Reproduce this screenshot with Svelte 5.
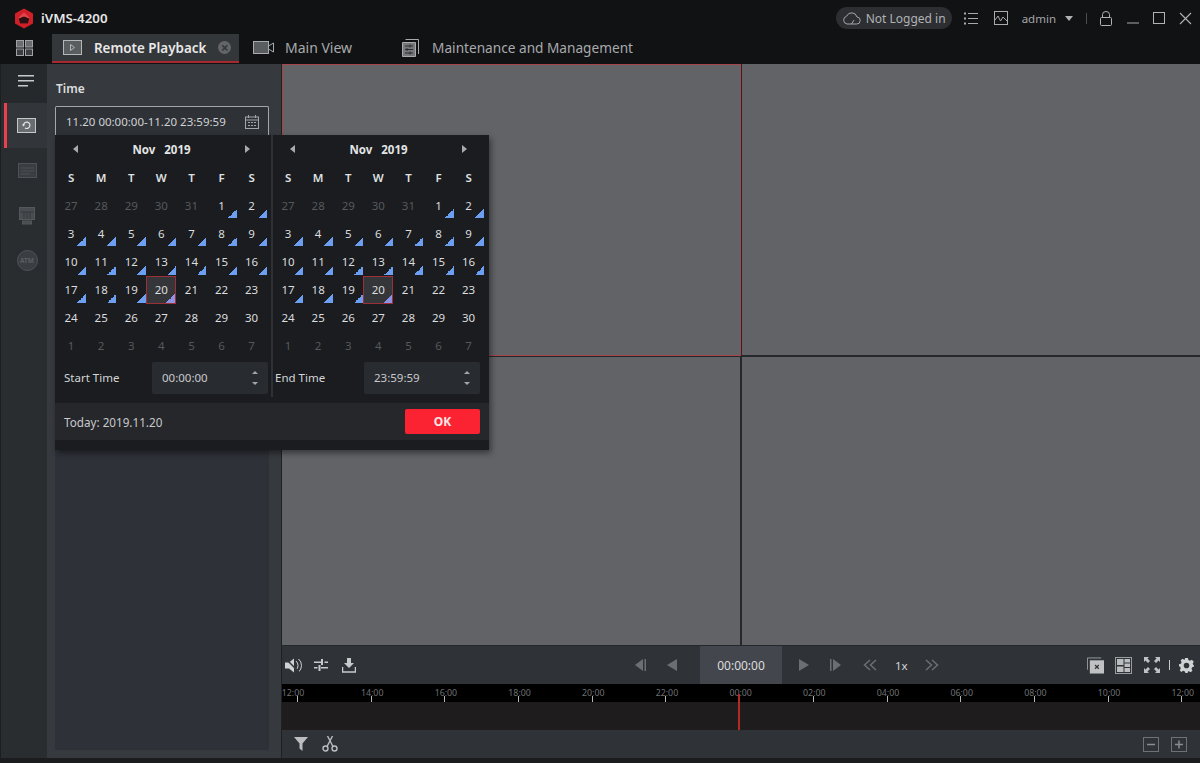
<script lang="ts">
	type Day = { label: number; muted?: boolean; mark?: boolean; selected?: boolean };

	const weekdays = ['S', 'M', 'T', 'W', 'T', 'F', 'S'];

	function buildDays(): Day[] {
		const days: Day[] = [];
		for (const n of [27, 28, 29, 30, 31]) days.push({ label: n, muted: true });
		for (let n = 1; n <= 30; n++) days.push({ label: n, mark: n <= 20, selected: n === 20 });
		for (let n = 1; n <= 7; n++) days.push({ label: n, muted: true });
		return days;
	}

	const days = buildDays();

	const calendars = [
		{ label: 'Start Time', time: '00:00:00' },
		{ label: 'End Time', time: '23:59:59' }
	];

	const hours = ['12:00', '14:00', '16:00', '18:00', '20:00', '22:00', '00:00', '02:00', '04:00', '06:00', '08:00', '10:00', '12:00'];
</script>

<div class="app">
	<header class="top">
		<div class="title-row">
			<svg class="logo" width="20" height="21" viewBox="0 0 20 21">
				<path d="M10 0.500 19 5.500V15.500L10 20.500 1 15.500V5.500Z" fill="#d01f27" />
				<path d="M10 4.500 15.500 9.500 14 15.500H6L4.500 9.500Z" fill="#e0454b" />
				<path d="M4.800 10.500 10 8.500 15.200 10.500 14 15.500H6Z" fill="#2c0f11" />
			</svg>
			<span class="app-name">iVMS-4200</span>
			<div class="pill">
				<svg width="19" height="14" viewBox="0 0 19 14" fill="none" stroke="#a4a6a9" stroke-width="1">
					<path d="M5 13H14.500A3.500 3.500 0 0 0 15 6 5.500 5.500 0 0 0 4.600 5.200 4 4 0 0 0 5 13Z" />
					<path d="M9.500 13 12 9" />
				</svg>
				<span>Not Logged in</span>
			</div>
			<svg class="list-icon" width="14" height="13" viewBox="0 0 14 13" fill="#a8aaad">
				<rect x="0" y="0.5" width="2" height="2" /><rect x="4" y="1" width="10" height="1" />
				<rect x="0" y="5.5" width="2" height="2" /><rect x="4" y="6" width="10" height="1" />
				<rect x="0" y="10.5" width="2" height="2" /><rect x="4" y="11" width="10" height="1" />
			</svg>
			<svg class="chart-icon" width="14" height="14" viewBox="0 0 14 14" fill="none" stroke="#a8aaad">
				<rect x="0.5" y="0.5" width="13" height="13" />
				<path d="M1 9 4 5 6.500 10 9 6 13 10" />
			</svg>
			<span class="user">admin</span>
			<span class="caret"></span>
			<span class="bar"></span>
			<svg class="lock" width="12" height="15" viewBox="0 0 12 15" fill="none" stroke="#b0b2b5">
				<rect x="0.5" y="6.5" width="11" height="8" rx="1" />
				<path d="M2.500 6.500V3.500A3.500 3 0 0 1 9.500 3.500V6.500" />
			</svg>
			<svg class="win-min" width="12" height="2" viewBox="0 0 12 2"><rect width="12" height="1" y="0.5" fill="#a8aaad" /></svg>
			<svg class="win-max" width="12" height="12" viewBox="0 0 12 12" fill="none" stroke="#b0b2b5"><rect x="0.5" y="0.5" width="11" height="11" /></svg>
			<svg class="win-close" width="13" height="13" viewBox="0 0 13 13" stroke="#b0b2b5" stroke-width="1.1"><path d="M1 1 12 12M12 1 1 12" /></svg>
		</div>
		<nav class="tab-row">
			<svg class="home" width="17" height="16" viewBox="0 0 17 16" stroke="#a0a2a5">
				<rect x="0.5" y="0.5" width="7" height="6.500" fill="#6a6c6f" /><rect x="9.5" y="0.5" width="7" height="6.500" fill="#6a6c6f" />
				<rect x="0.5" y="9" width="7" height="6.500" fill="#3c3e41" /><rect x="9.5" y="9" width="7" height="6.500" fill="#3c3e41" />
			</svg>
			<div class="tab active">
				<svg width="19" height="15" viewBox="0 0 19 15" fill="none" stroke="#b4b6b8">
					<rect x="0.5" y="0.5" width="18" height="14" fill="#5a5d60" />
					<path d="M7.500 4.500 11.500 7.500 7.500 10.500Z" />
				</svg>
				<span class="tab-label">Remote Playback</span>
				<span class="tab-close">×</span>
			</div>
			<div class="tab main-view">
				<svg width="21" height="13" viewBox="0 0 21 13" fill="#5a5d60" stroke="#a8aaad">
					<rect x="0.5" y="0.5" width="15" height="12" />
					<path d="M15.500 5 20.500 2V11L15.500 8" fill="none" />
				</svg>
				<span class="tab-label">Main View</span>
			</div>
			<div class="tab maint">
				<svg width="17" height="18" viewBox="0 0 17 18" fill="none" stroke="#a8aaad">
					<path d="M0.500 3.500H13.500V17.500H0.500Z" fill="#76787b" />
					<path d="M3.500 0.500H16.500V15" />
					<path d="M3 7H11M3 10.500H11M3 14H11" stroke="#2a2c2e" />
					<path d="M8 5.500V8.500M5 9V12M8 12.500V15.500" stroke="#2a2c2e" />
				</svg>
				<span class="tab-label">Maintenance and Management</span>
			</div>
		</nav>
	</header>

	<div class="body">
		<aside class="rail">
			<div class="rail-menu">
				<svg width="16" height="12" viewBox="0 0 16 12" fill="#c8c9cb">
					<rect width="16" height="1.500" /><rect y="5" width="16" height="1.500" /><rect y="10" width="10" height="1.500" />
				</svg>
			</div>
			<div class="rail-item current">
				<svg width="19" height="15" viewBox="0 0 19 15">
					<rect x="0.5" y="0.5" width="18" height="14" fill="#6a6d70" stroke="#c6c7c9" />
					<path d="M6.500 7A3.200 3.200 0 1 1 8 10" fill="none" stroke="#e2e3e4" stroke-width="1.200" />
					<path d="M4.800 6.500H8.200L6.500 8.500Z" fill="#e2e3e4" />
				</svg>
			</div>
			<div class="rail-item">
				<svg width="19" height="15" viewBox="0 0 19 15" fill="#3a3d41" stroke="#4e5155">
					<rect x="0.5" y="0.5" width="18" height="14" />
					<path d="M3 5H16M3 8H16M3 11H12" fill="none" />
				</svg>
			</div>
			<div class="rail-item">
				<svg width="16" height="18" viewBox="0 0 16 18" fill="#4a4d50" stroke="#55585b">
					<rect x="0.500" y="0.500" width="15" height="12" />
					<path d="M1 5H15M5 5V12M8 5V12M11 5V12" stroke="#33363a" fill="none" />
					<rect x="3.500" y="14" width="9" height="3" />
				</svg>
			</div>
			<div class="rail-item">
				<div class="atm">ATM</div>
			</div>
		</aside>

		<section class="side">
			<div class="side-title">Time</div>
			<div class="range">
				<span>11.20 00:00:00-11.20 23:59:59</span>
				<svg width="14" height="14" viewBox="0 0 14 14" fill="none" stroke="#a4a6a9">
					<rect x="0.5" y="2" width="13" height="11.500" />
					<path d="M0.500 5H13.500M3.500 0V3M10.500 0V3" />
					<path d="M3 7.500H5M6 7.500H8M9 7.500H11M3 10.500H5M6 10.500H8M9 10.500H11" />
				</svg>
			</div>
			<div class="side-fill"></div>

			<div class="popup">
				<div class="calendars">
					{#each calendars as cal, c}
						<div class="cal" class:second={c === 1}>
							<div class="month">
								<span class="arrow left"></span>
								<span class="month-name"><span>Nov</span><span>2019</span></span>
								<span class="arrow right"></span>
							</div>
							<div class="grid">
								{#each weekdays as w}
									<div class="dow">{w}</div>
								{/each}
								{#each days as d}
									<div class="day" class:muted={d.muted} class:mark={d.mark} class:selected={d.selected}>{d.label}</div>
								{/each}
							</div>
							<div class="time-row">
								<span class="time-label">{cal.label}</span>
								<div class="time-input">
									<span>{cal.time}</span>
									<span class="spin"><i class="up"></i><i class="down"></i></span>
								</div>
							</div>
						</div>
					{/each}
				</div>
				<div class="popup-foot">
					<span>Today: 2019.11.20</span>
					<button>OK</button>
				</div>
			</div>
		</section>

		<main class="content">
			<div class="videos">
				<div class="cell first"></div>
				<div class="cell"></div>
				<div class="cell"></div>
				<div class="cell"></div>
			</div>

			<div class="controls">
				<div class="ctl-side">
					<div class="ctl-left">
						<svg width="17" height="15" viewBox="0 0 17 15" fill="#d0d1d3">
							<path d="M0 4.500H4L9 0.500V14.500L4 10.500H0Z" />
							<path d="M11 3A6 6 0 0 1 11 12M13.500 1A8.500 8.500 0 0 1 13.500 14" fill="none" stroke="#d0d1d3" />
							<path d="M1 1 14 14" stroke="#34373c" stroke-width="1.500" />
						</svg>
						<svg width="14" height="12" viewBox="0 0 14 12" fill="#c8c9cb">
							<rect y="2.500" width="7" height="1.500" /><rect x="7" y="0" width="2" height="6" /><rect x="10.500" y="2.500" width="3.500" height="1.500" />
							<rect y="8" width="3.500" height="1.500" /><rect x="4.500" y="6" width="2" height="6" /><rect x="7" y="8" width="7" height="1.500" />
						</svg>
						<svg class="save" width="14" height="15" viewBox="0 0 14 15" fill="#c8c9cb">
							<path d="M5 0H9V5H12L7 10 2 5H5Z" />
							<path d="M0.500 9V14H13.500V9" fill="none" stroke="#c8c9cb" stroke-width="1.500" />
						</svg>
					</div>
					<div class="play-back">
						<svg width="12" height="12" viewBox="0 0 12 12" fill="#6c6f72"><path d="M9 0V12L1 6Z" /><rect x="10.500" width="1.500" height="12" /></svg>
						<svg width="10" height="12" viewBox="0 0 10 12" fill="#6c6f72"><path d="M10 0V12L0 6Z" /></svg>
					</div>
				</div>
				<div class="clock">00:00:00</div>
				<div class="ctl-side">
					<div class="play-forward">
						<svg width="10" height="12" viewBox="0 0 10 12" fill="#6c6f72"><path d="M0 0V12L10 6Z" /></svg>
						<svg class="step" width="11" height="12" viewBox="0 0 11 12" fill="#6c6f72"><rect width="1.500" height="12" /><path d="M3 0V12L11 6Z" /></svg>
						<svg class="slow" width="14" height="12" viewBox="0 0 14 12" fill="none" stroke="#6c6f72" stroke-width="1.500"><path d="M7 1 1.500 6 7 11M13 1 7.500 6 13 11" /></svg>
						<span class="speed">1x</span>
						<svg width="14" height="12" viewBox="0 0 14 12" fill="none" stroke="#6c6f72" stroke-width="1.500"><path d="M1 1 6.500 6 1 11M7 1 12.500 6 7 11" /></svg>
					</div>
					<div class="ctl-right">
						<svg width="17" height="17" viewBox="0 0 18 17">
							<path d="M0.500 13V0.500H15" fill="none" stroke="#9a9c9f" />
							<rect x="3" y="3" width="15" height="14" fill="#c0c1c3" />
							<path d="M8.500 8 12.500 12M12.500 8 8.500 12" stroke="#33363a" stroke-width="1.300" />
						</svg>
						<svg width="17" height="17" viewBox="0 0 17 17" fill="#bcbdbf">
							<rect x="0.500" y="0.500" width="16" height="16" fill="none" stroke="#9a9c9f" />
							<rect x="2" y="2" width="6.500" height="6" /><rect x="2" y="9.500" width="6.500" height="5.500" />
							<rect x="9.500" y="2" width="5.500" height="3.500" /><rect x="9.500" y="6.500" width="5.500" height="3.500" /><rect x="9.500" y="11" width="5.500" height="4" />
						</svg>
						<svg class="fit" width="16" height="16" viewBox="0 0 16 16" fill="#c0c1c3">
							<path d="M0 0H5L3.500 1.500 6 4 4 6 1.500 3.500 0 5Z" />
							<path d="M16 0V5L14.500 3.500 12 6 10 4 12.500 1.500 11 0Z" />
							<path d="M0 16V11L1.500 12.500 4 10 6 12 3.500 14.500 5 16Z" />
							<path d="M16 16H11L12.500 14.500 10 12 12 10 14.500 12.500 16 11Z" />
						</svg>
						<span class="ctl-bar"></span>
						<svg width="15" height="15" viewBox="0 0 16 16" fill="#d0d1d3">
							<path fill-rule="evenodd" d="M6.500 0H9.500L10 2.200 11.700 3 13.700 1.900 15.800 4 14.600 5.900 15.300 7.500 16 8V9L14 9.800 13.300 11.500 14.300 13.600 12.400 15.200 10.500 14 9.500 14.500 9.200 16H6.800L6.300 14.300 4.500 13.700 2.400 14.800 0.800 13 1.900 11 1.200 9.300 0 8.800V6.700L2 6.200 2.800 4.400 1.800 2.400 3.800 0.800 5.500 1.900 6.200 1.600ZM8 5A3 3 0 1 0 8 11 3 3 0 0 0 8 5Z" />
						</svg>
					</div>
				</div>
			</div>

			<div class="ruler">
				<div class="hours">
					{#each hours as h}
						<div class="hour"><span>{h}</span><i></i></div>
					{/each}
				</div>
			</div>
			<div class="track"><span class="playhead"></span></div>

			<div class="foot">
				<div class="foot-left">
					<svg width="14" height="14" viewBox="0 0 14 14" fill="#bcbdbf"><path d="M0 0H14L8.500 6.500V14L5.500 11.500V6.500Z" /></svg>
					<svg width="16" height="16" viewBox="0 0 16 16" fill="none" stroke="#bcbdbf" stroke-width="1.400">
						<circle cx="3.500" cy="12.500" r="2.500" /><circle cx="12.500" cy="12.500" r="2.500" />
						<path d="M5 10.500 10.500 0M11 10.500 5.500 0" />
					</svg>
				</div>
				<div class="foot-right">
					<svg width="16" height="15" viewBox="0 0 16 15" fill="none" stroke="#6f7275"><rect x="0.500" y="0.500" width="15" height="14" /><path d="M4 7.500H12" stroke="#8a8c8f" stroke-width="1.500" /></svg>
					<svg width="16" height="15" viewBox="0 0 16 15" fill="none" stroke="#6f7275"><rect x="0.500" y="0.500" width="15" height="14" /><path d="M4 7.500H12M8 3.500V11.500" stroke="#8a8c8f" stroke-width="1.500" /></svg>
				</div>
			</div>
		</main>
	</div>
	<div class="bottom-strip"></div>
</div>

<style>
	:global(body) {
		margin: 0;
		background: #1a1c1e;
	}

	.app {
		width: 1200px;
		height: 763px;
		display: flex;
		flex-direction: column;
		overflow: hidden;
		font-family: 'Noto Sans', 'Open Sans', sans-serif;
		font-size: 12px;
		color: #d8d9da;
	}

	svg {
		display: block;
		flex: none;
	}

	.top {
		height: 64px;
		flex: none;
		background: #111214;
		box-sizing: border-box;
	}

	.title-row {
		height: 34px;
		display: flex;
		align-items: center;
		padding: 2px 8px 0 14px;
		box-sizing: border-box;
	}

	.app-name {
		margin-left: 7px;
		font-size: 13.300px;
		font-weight: 600;
		color: #e6e6e6;
	}

	.pill {
		margin-left: auto;
		width: 116px;
		height: 22px;
		box-sizing: border-box;
		padding-left: 6px;
		display: flex;
		align-items: center;
		gap: 5px;
		background: #2c2e32;
		border-radius: 11px;
		color: #b0b2b4;
		font-size: 12px;
		white-space: nowrap;
	}

	.list-icon {
		margin-left: 12px;
	}

	.chart-icon {
		margin-left: 16px;
	}

	.user {
		margin-left: 14px;
		color: #a4a6a8;
		font-size: 11.500px;
	}

	.caret {
		margin-left: 9px;
		margin-top: 1px;
		border: 4px solid transparent;
		border-top: 5px solid #b0b2b5;
		border-bottom: 0;
	}

	.bar {
		margin-left: 13px;
		width: 1px;
		height: 11px;
		background: #4a4c4f;
	}

	.lock {
		margin-left: 13px;
	}

	.win-min {
		margin-left: 15px;
		margin-top: 10px;
	}

	.win-max {
		margin-left: 14px;
	}

	.win-close {
		margin-left: 14px;
	}

	.tab-row {
		height: 30px;
		box-sizing: border-box;
		padding: 0 0 1px 16px;
		display: flex;
		align-items: stretch;
	}

	.home {
		align-self: center;
		margin-right: 19px;
		margin-bottom: 2px;
	}

	.tab {
		display: flex;
		align-items: center;
		box-sizing: border-box;
		padding-bottom: 2px;
	}

	.tab-label {
		font-size: 13.650px;
		color: #a8aaac;
		white-space: nowrap;
	}

	.tab.active {
		width: 187px;
		padding-left: 11px;
		background: #34373a;
		border-bottom: 2px solid #a8282f;
		padding-bottom: 0;
	}

	.tab.active .tab-label {
		margin-left: 12px;
		font-size: 13.400px;
		color: #e8e8e8;
		font-weight: 600;
	}

	.tab-close {
		margin-left: 12px;
		width: 13px;
		height: 13px;
		border-radius: 50%;
		background: #636568;
		color: #34373a;
		font-size: 14px;
		font-weight: 700;
		line-height: 13px;
		text-align: center;
	}

	.main-view {
		margin-left: 14px;
		gap: 11px;
	}

	.main-view .tab-label {
		font-size: 14px;
	}

	.maint {
		margin-left: 50px;
		gap: 13px;
	}

	.body {
		flex: 1;
		display: flex;
		min-height: 0;
	}

	.bottom-strip {
		height: 5px;
		flex: none;
		background: #1a1c1e;
	}

	.rail {
		width: 47px;
		flex: none;
		box-sizing: border-box;
		border-left: 1px solid #1c1e20;
		background: #2a2d30;
		display: flex;
		flex-direction: column;
		padding-left: 3px;
	}

	.rail-menu {
		height: 39px;
		margin-left: -3px;
		display: flex;
		align-items: flex-start;
		justify-content: center;
		padding: 11px 0 0 4px;
		box-sizing: border-box;
		background: #26292c;
	}

	.rail-item {
		height: 45px;
		display: flex;
		align-items: center;
		justify-content: center;
		padding-left: 3px;
	}

	.rail-item.current {
		background: #32363b;
		border-left: 3px solid #e8404c;
		padding-left: 0;
		padding-right: 1px;
	}

	.atm {
		width: 19px;
		height: 19px;
		border-radius: 50%;
		background: #3a3d41;
		border: 1px solid #505357;
		color: #5c5f63;
		font-size: 6.500px;
		line-height: 19px;
		text-align: center;
		font-weight: 700;
	}

	.side {
		position: relative;
		width: 234px;
		flex: none;
		box-sizing: border-box;
		background: #36393e;
		padding: 15px 12px 8px 8px;
		display: flex;
		flex-direction: column;
	}

	.side-title {
		height: 27px;
		padding: 1px 0 0 1px;
		box-sizing: border-box;
		font-size: 12px;
		font-weight: 600;
		color: #dcdddf;
		line-height: 18px;
	}

	.range {
		height: 30px;
		flex: none;
		box-sizing: border-box;
		border: 1px solid #a4a6a9;
		border-bottom: 0;
		border-radius: 2px 2px 0 0;
		padding: 0 9px 0 10px;
		display: flex;
		align-items: center;
		justify-content: space-between;
		background: #2e3136;
		font-size: 11.500px;
		color: #d0d1d3;
		white-space: nowrap;
	}

	.side-fill {
		flex: 1;
		background: #2e3138;
	}

	.popup {
		position: absolute;
		left: 8px;
		top: 71px;
		width: 434px;
		height: 315px;
		background: #1a1c1f;
		box-shadow: 2px 3px 6px rgba(0, 0, 0, 0.45);
		display: flex;
		flex-direction: column;
		z-index: 2;
	}

	.calendars {
		display: flex;
		height: 262px;
	}

	.cal {
		width: 216px;
		flex: none;
		box-sizing: border-box;
		padding-left: 1px;
	}

	.cal.second {
		width: 218px;
		border-left: 2px solid #2e3034;
		padding-left: 0;
	}

	.month {
		height: 28px;
		display: flex;
		align-items: center;
		justify-content: space-between;
		padding: 0 21px 0 17px;
	}

	.second .month {
		padding-right: 22px;
	}

	.month-name {
		display: flex;
		gap: 9px;
		font-size: 11.500px;
		font-weight: 700;
		color: #e4e5e6;
	}

	.arrow {
		border: 4px solid transparent;
		border-left-width: 0;
		border-right: 5px solid #a8aaac;
	}

	.arrow.right {
		border-right-width: 0;
		border-left: 5px solid #a8aaac;
		border-right-color: transparent;
	}

	.grid {
		display: grid;
		grid-template-columns: repeat(7, 30.1px);
		grid-auto-rows: 28.15px;
		font-size: 11.500px;
	}

	.dow {
		display: flex;
		align-items: center;
		justify-content: center;
		font-weight: 600;
		color: #dfe0e1;
	}

	.day {
		position: relative;
		display: flex;
		align-items: center;
		justify-content: center;
		box-sizing: border-box;
		color: #dcdddf;
	}

	.day.muted {
		color: #56595c;
	}

	.day.mark::after {
		content: '';
		position: absolute;
		right: 0;
		bottom: 1px;
		width: 9px;
		height: 9px;
		background: linear-gradient(135deg, transparent 50%, #6c9ff2 50%);
	}

	.day.selected {
		background: #35363a;
		box-shadow: inset 0 0 0 1px #9c2f37;
	}

	.day.selected::after {
		background: linear-gradient(135deg, transparent 50%, #8f93e6 50%);
		right: 1px;
	}

	.time-row {
		display: flex;
		align-items: center;
		justify-content: space-between;
		height: 32px;
		margin-top: 2px;
		padding: 0 3px 0 8px;
	}

	.second .time-row {
		padding-left: 2px;
		padding-right: 9px;
	}

	.time-label {
		font-size: 11.500px;
		color: #d4d5d7;
		margin-top: -1px;
	}

	.time-input {
		width: 116px;
		height: 32px;
		box-sizing: border-box;
		padding: 0 10px;
		display: flex;
		align-items: center;
		justify-content: space-between;
		background: #282b30;
		border-radius: 2px;
		font-size: 11.500px;
		color: #c8c9cb;
	}

	.spin {
		display: flex;
		flex-direction: column;
		gap: 8px;
	}

	.spin i {
		display: block;
		border: 3px solid transparent;
		border-top: 0;
		border-bottom: 3px solid #a4a6a9;
	}

	.spin i.down {
		border-bottom: 0;
		border-top: 3px solid #a4a6a9;
	}

	.popup-foot {
		margin-top: 6px;
		height: 37px;
		flex: none;
		box-sizing: border-box;
		padding: 0 9px;
		display: flex;
		align-items: center;
		justify-content: space-between;
		background: #25272b;
		font-size: 11.700px;
		color: #c8c9cb;
	}

	.popup-foot button {
		width: 75px;
		height: 25px;
		border: 0;
		border-radius: 2px;
		background: #fb2231;
		color: #f6e6e6;
		font-family: inherit;
		font-size: 12px;
		font-weight: 700;
		padding: 0;
	}

	.content {
		flex: 1;
		min-width: 0;
		display: flex;
		flex-direction: column;
		background: #2f3338;
		border-left: 1px solid #1e2023;
	}

	.videos {
		height: 582px;
		flex: none;
		box-sizing: border-box;
		padding-bottom: 1px;
		display: grid;
		grid-template-columns: 458px 458px;
		grid-template-rows: 291px 288px;
		gap: 2px;
		background: #26272a;
	}

	.cell {
		background: #626366;
	}

	.cell.first {
		margin: 0 -1px -1px 0;
		box-shadow: inset 0 0 0 1px #a8454a;
	}

	.controls {
		height: 38px;
		flex: none;
		display: grid;
		grid-template-columns: 1fr 82px 1fr;
		align-items: stretch;
		background: #2f3338;
	}

	.ctl-side {
		display: flex;
		align-items: center;
		justify-content: space-between;
		min-width: 0;
	}

	.ctl-left {
		display: flex;
		align-items: center;
		gap: 12px;
		padding-left: 3px;
	}

	.save {
		margin-left: 2px;
	}

	.play-back {
		display: flex;
		align-items: center;
		gap: 21px;
		padding-right: 23px;
	}

	.play-forward {
		display: flex;
		align-items: center;
		gap: 17px;
		padding-left: 17px;
	}

	.step {
		margin-left: 4px;
	}

	.slow {
		margin-left: 5px;
	}

	.clock {
		display: flex;
		align-items: center;
		justify-content: center;
		background: #43464c;
		color: #dcdddf;
		font-size: 12px;
	}

	.speed {
		margin-left: 1px;
		font-size: 11.500px;
		color: #d4d5d7;
	}

	.ctl-right {
		display: flex;
		align-items: center;
		gap: 11px;
		padding-right: 6px;
	}

	.fit {
		margin-left: 1px;
	}

	.ctl-bar {
		width: 1px;
		height: 10px;
		background: #c8c9cb;
		margin: 0 -2px;
	}

	.ruler {
		height: 18px;
		flex: none;
		background: #000;
		overflow: hidden;
	}

	.hours {
		display: grid;
		grid-template-columns: repeat(13, 73.7px);
		margin-left: -21.850px;
		height: 100%;
	}

	.hour {
		position: relative;
		color: #6f7173;
		font-size: 8.800px;
		text-align: center;
		line-height: 18px;
	}

	.hour span {
		display: block;
		padding-left: 3px;
	}

	.hour:first-child span {
		padding-left: 0;
		padding-right: 8px;
	}

	.hour i {
		position: absolute;
		left: 50%;
		bottom: 0;
		width: 1px;
		height: 6px;
		background: #b4b6b8;
	}

	.track {
		position: relative;
		height: 28px;
		flex: none;
		background: #1e1c1c;
	}

	.playhead {
		position: absolute;
		left: 456px;
		top: -8px;
		bottom: 0;
		width: 2px;
		background: #b32a22;
	}

	.foot {
		flex: 1;
		display: flex;
		align-items: center;
		justify-content: space-between;
		padding: 0 13px 0 12px;
		background: #2f3338;
	}

	.foot-left {
		display: flex;
		align-items: center;
		gap: 14px;
	}

	.foot-right {
		display: flex;
		align-items: center;
		gap: 12px;
	}
</style>
